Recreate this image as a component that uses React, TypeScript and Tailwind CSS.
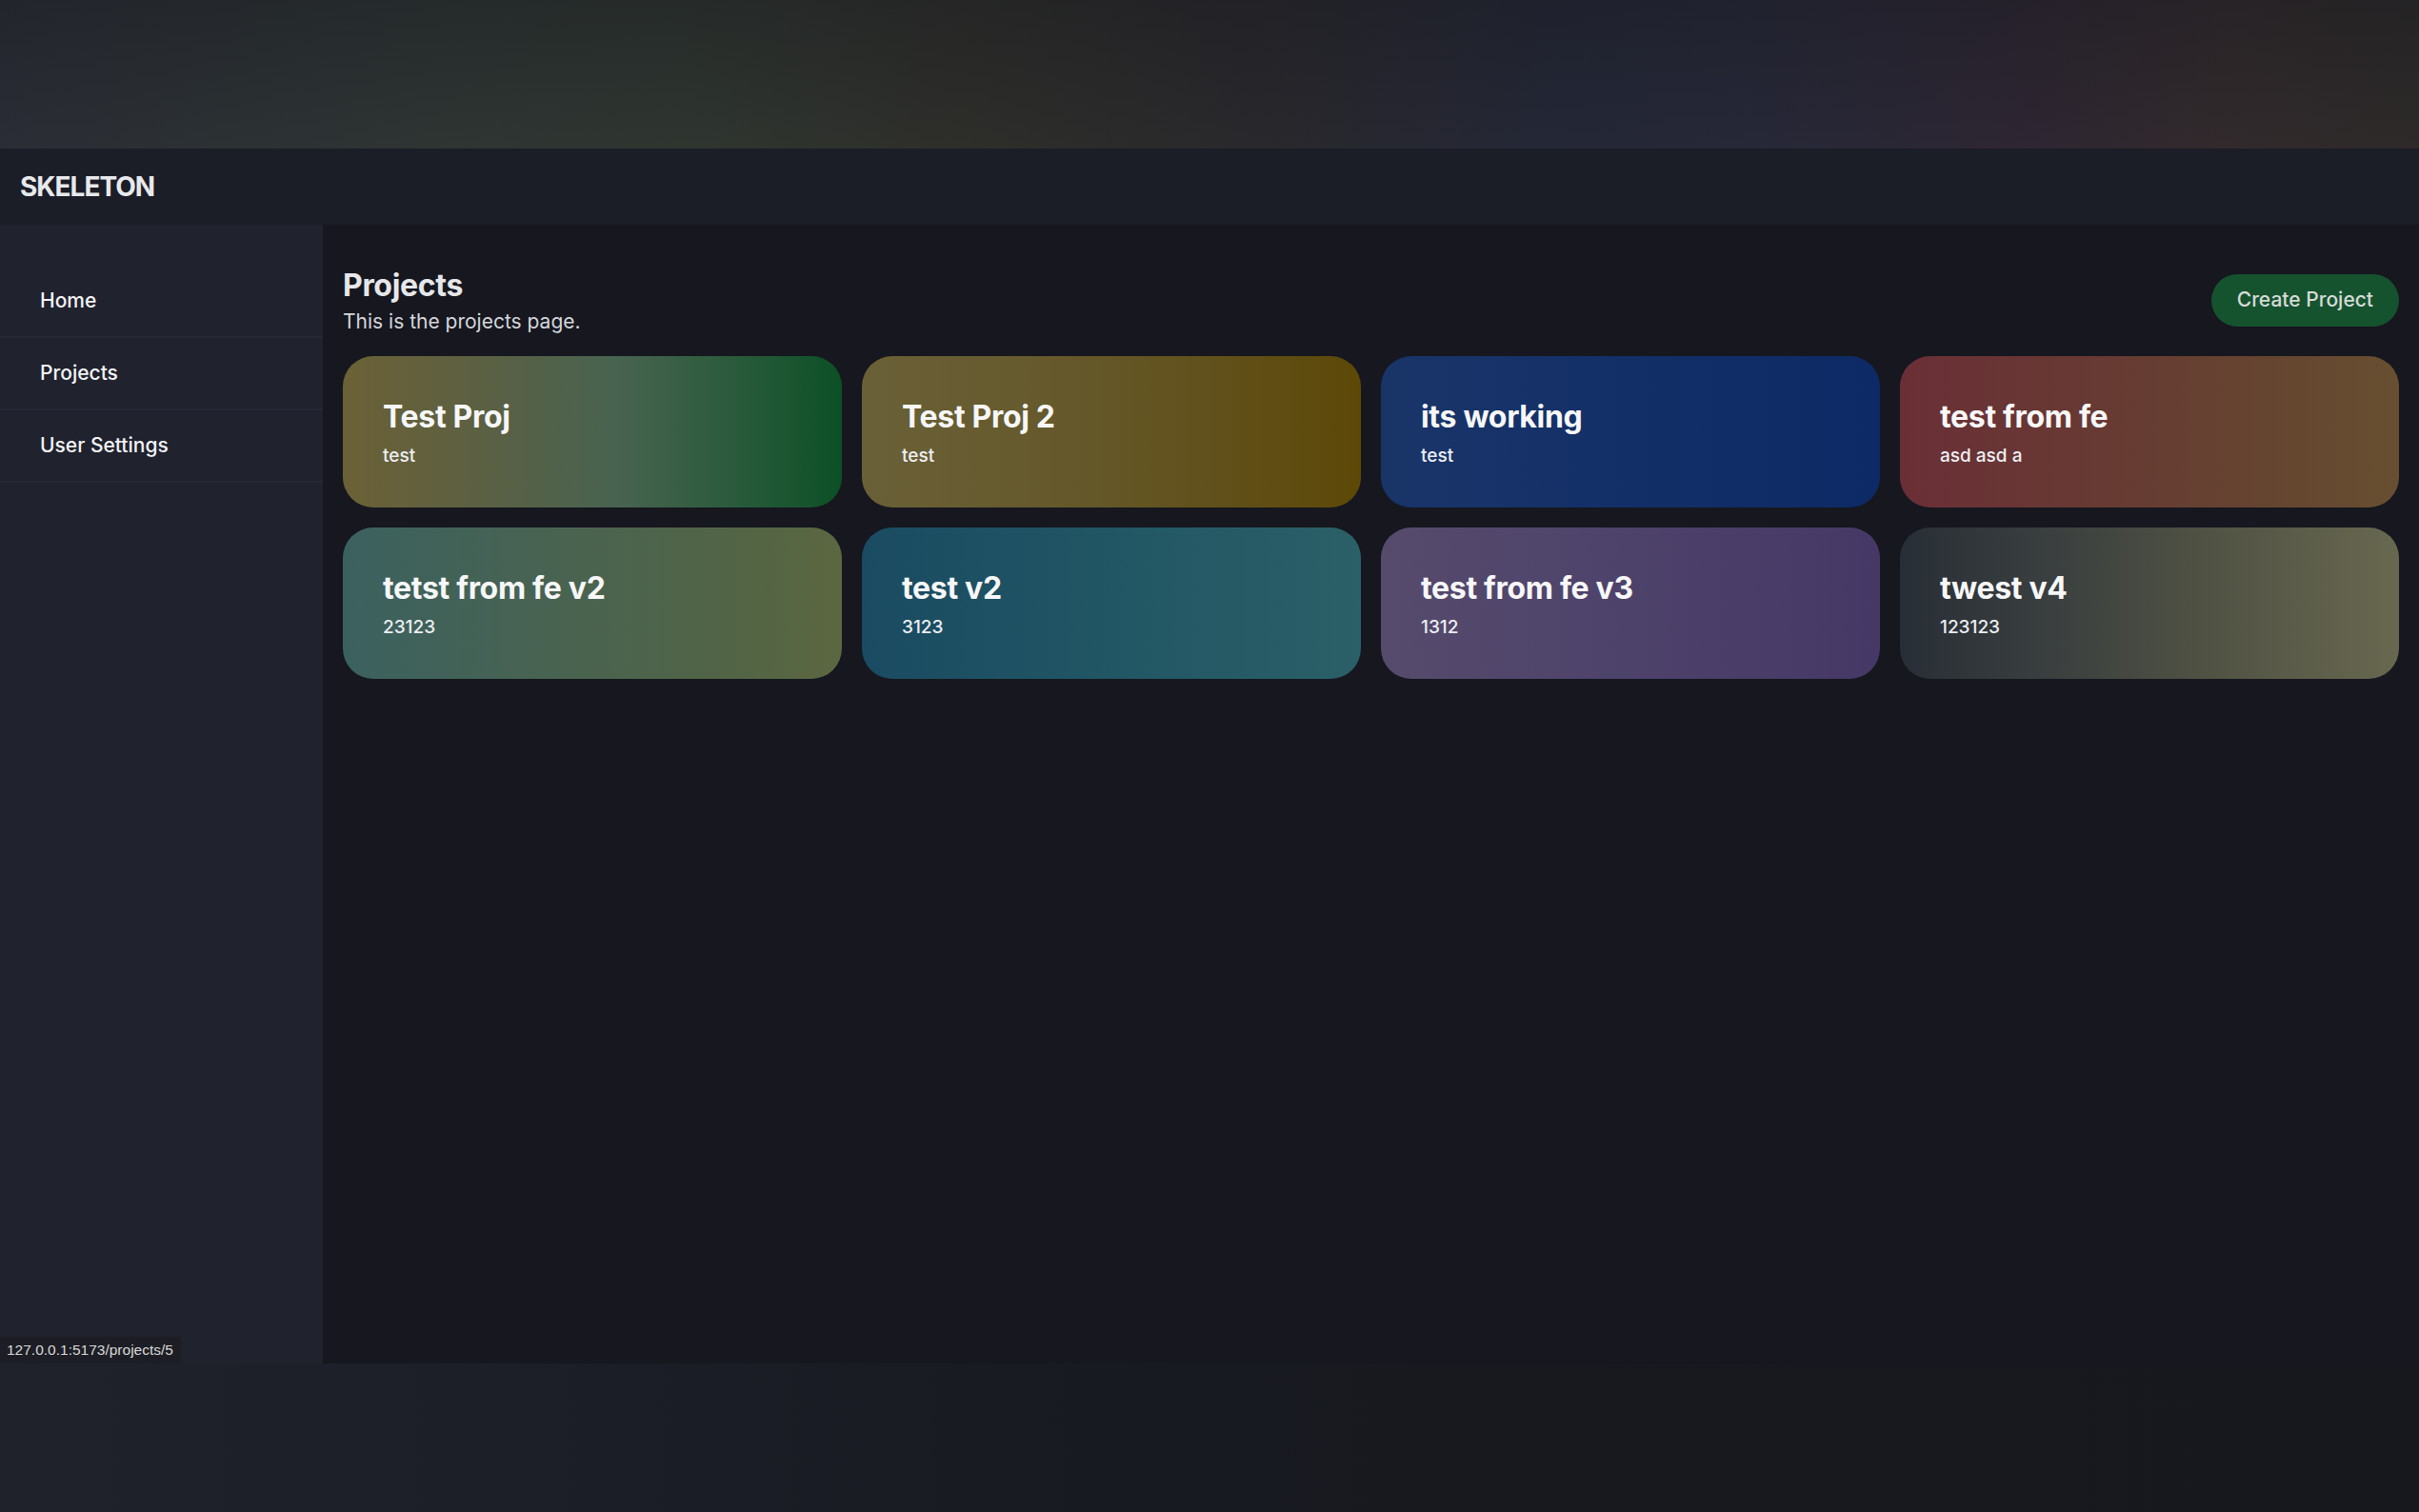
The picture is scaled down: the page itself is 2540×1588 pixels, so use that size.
import React from 'react';

type Project = {
  name: string;
  description: string;
  bg: string;
};

const projects: Project[] = [
  { name: 'Test Proj', description: 'test', bg: 'bg-[linear-gradient(90deg,#6b6136_0%,#5a6044_30%,#486350_55%,#285a3a_80%,#0c5026_100%)]' },
  { name: 'Test Proj 2', description: 'test', bg: 'bg-[linear-gradient(90deg,#6a6037_0%,#65592c_40%,#604f18_75%,#5d4807_100%)]' },
  { name: 'its working', description: 'test', bg: 'bg-[linear-gradient(90deg,#193568_0%,#132f68_50%,#0d2a66_100%)]' },
  { name: 'test from fe', description: 'asd asd a', bg: 'bg-[linear-gradient(90deg,#6a2f36_0%,#673a33_40%,#654530_75%,#674f31_100%)]' },
  { name: 'tetst from fe v2', description: '23123', bg: 'bg-[linear-gradient(90deg,#3b615f_0%,#486352_40%,#516447_75%,#5b6740_100%)]' },
  { name: 'test v2', description: '3123', bg: 'bg-[linear-gradient(90deg,#1a4b62_0%,#215664_50%,#2b6068_100%)]' },
  { name: 'test from fe v3', description: '1312', bg: 'bg-[linear-gradient(90deg,#564b6c_0%,#4d426a_50%,#463866_100%)]' },
  { name: 'twest v4', description: '123123', bg: 'bg-[linear-gradient(90deg,#282e36_0%,#3a3f3f_30%,#4f5143_60%,#686850_100%)]' },
];

const navItems = ['Home', 'Projects', 'User Settings'];

function ProjectCard({ project }: { project: Project }) {
  return (
    <a
      href="#"
      className={`block h-[159px] rounded-[32px] px-[42px] pt-[41px] ${project.bg}`}
    >
      <h2 className="text-[32px] font-bold leading-[45px] tracking-[-0.01em] text-[#f7f7f8]">
        {project.name}
      </h2>
      <p className="mt-[6px] text-[19px] font-medium leading-[26px] text-[#eceef2]">
        {project.description}
      </p>
    </a>
  );
}

export default function App() {
  return (
    <div className="relative flex h-[1588px] flex-col overflow-hidden bg-[#16171f] font-['Inter','Noto_Sans',sans-serif]">
      {/* blurred backdrop strip above the app */}
      <div className="relative h-[156px] shrink-0 bg-[linear-gradient(90deg,#2a2d35_0%,#2e3533_18%,#2f3630_28%,#2e2e2a_40%,#29282c_52%,#242736_64%,#262838_72%,#2e2632_84%,#322a2c_92%,#2d2a29_100%)]">
        <div className="absolute inset-0 bg-[linear-gradient(180deg,rgba(20,22,28,0.35)_0%,rgba(20,22,28,0)_100%)]" />
      </div>

      <header className="flex h-[80px] shrink-0 items-center bg-[#1b1d27] px-[21px]">
        <span className="text-[28px] font-bold tracking-[-0.035em] text-[#e8e9ec]">SKELETON</span>
      </header>

      <div className="flex h-[1196px] shrink-0">
        <aside className="w-[339px] shrink-0 bg-[#20222e] pt-[43px]">
          <nav className="flex flex-col">
            {navItems.map((item) => (
              <a
                key={item}
                href="#"
                className="flex h-[76px] items-center border-b-2 border-[#262935] pl-[42px] text-[21px] font-medium text-[#f3f4f6]"
              >
                {item}
              </a>
            ))}
          </nav>
        </aside>

        <main className="flex-1 px-[21px] pt-[41px]">
          <div className="flex items-center justify-between">
            <div>
              <h1 className="text-[32px] font-bold leading-[45px] tracking-[-0.01em] text-[#e6e7ea]">Projects</h1>
              <p className="text-[21px] leading-[31px] text-[#d4d6dc]">This is the projects page.</p>
            </div>
            <button className="h-[55px] rounded-full bg-[#15532e] px-[27px] text-[21px] font-medium text-[#d6dbd8]">
              Create Project
            </button>
          </div>

          <div className="mt-[21px] grid grid-cols-4 gap-[21px]">
            {projects.map((project) => (
              <ProjectCard key={project.name} project={project} />
            ))}
          </div>
        </main>
      </div>

      {/* backdrop strip below the app */}
      <div className="h-[156px] shrink-0 bg-[linear-gradient(90deg,#20222b_0%,#1d1f28_20%,#191b23_40%,#17191f_60%,#16181e_100%)]" />

      {/* browser status bubble */}
      <div className="absolute bottom-[156px] left-0 flex h-[28px] items-center bg-[#1d1e25] pl-[7px] pr-[8px] font-['Liberation_Sans',sans-serif] text-[15.5px] text-[#d8d8d8]">
        127.0.0.1:5173/projects/5
      </div>
    </div>
  );
}
